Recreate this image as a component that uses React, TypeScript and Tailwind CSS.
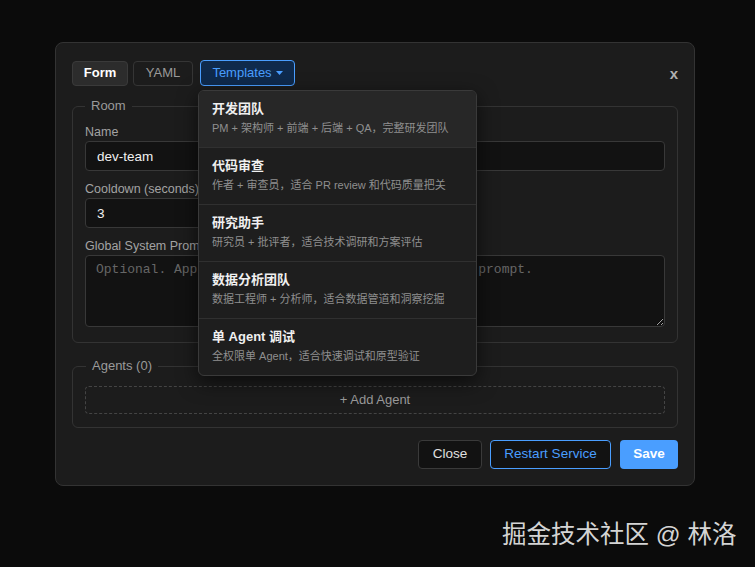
import React from "react";

const templates = [
  { title: "开发团队", desc: "PM + 架构师 + 前端 + 后端 + QA，完整研发团队" },
  { title: "代码审查", desc: "作者 + 审查员，适合 PR review 和代码质量把关" },
  { title: "研究助手", desc: "研究员 + 批评者，适合技术调研和方案评估" },
  { title: "数据分析团队", desc: "数据工程师 + 分析师，适合数据管道和洞察挖掘" },
  { title: "单 Agent 调试", desc: "全权限单 Agent，适合快速调试和原型验证" },
];

const font = "font-['Liberation_Sans','Noto_Sans_CJK_SC',sans-serif]";

function Field({ label, value, className = "" }: { label: string; value?: string; className?: string }) {
  return (
    <div className={"flex flex-col " + className}>
      <label className="text-[12.5px] leading-[18px] text-[#a3a3a3] whitespace-nowrap">{label}</label>
      <input
        readOnly
        value={value ?? ""}
        className="h-[30px] rounded-[4px] border border-[#383838] bg-[#121212] px-[11px] text-[13.5px] text-[#f0f0f0] outline-none"
      />
    </div>
  );
}

export default function App() {
  return (
    <div className={"relative w-[755px] h-[567px] bg-[#0b0b0b] overflow-hidden pt-[42px] pl-[55px] " + font}>
      <div className="relative w-[640px] h-[444px] rounded-[8px] border border-[#333] bg-[#1c1c1c] px-4 pt-[17px] pb-4 flex flex-col">
        {/* header */}
        <div className="flex items-center">
          <button className="h-[25px] w-[56px] rounded-[4px] border border-[#3a3a3a] bg-[#2c2c2c] text-[13px] font-semibold text-white">
            Form
          </button>
          <button className="ml-[5px] h-[25px] w-[60px] rounded-[4px] border border-[#353535] bg-transparent text-[13px] text-[#9a9a9a]">
            YAML
          </button>
          <button className="ml-[7px] h-[26px] w-[95px] rounded-[4px] border-[1.5px] border-[#4a9eff] bg-[#0f2a4c] text-[13px] text-[#4a9eff] flex items-center justify-center gap-[4px]">
            Templates
            <svg width="7" height="4" viewBox="0 0 7 4"><path d="M0 0h7L3.5 4z" fill="#4a9eff" /></svg>
          </button>
          <div className="flex-1" />
          <span className="text-[15px] font-bold text-[#b0b0b0] leading-none">x</span>
        </div>

        {/* Room */}
        <fieldset className="mt-[12px] rounded-[6px] border border-[#333] px-3 pb-[15px]">
          <legend className="px-1.5 text-[13px] leading-4 text-[#9a9a9a]">Room</legend>
          <div className="mt-[9px] grid grid-cols-2 gap-x-3 gap-y-[9px]">
            <Field label="Name" value="dev-team" />
            <Field label="Default Model" />
            <Field label="Cooldown (seconds)" value="3" />
            <div />
            <div className="col-span-2 flex flex-col">
              <label className="text-[12.5px] leading-[18px] text-[#a3a3a3]">Global System Prompt</label>
              <textarea
                readOnly
                placeholder="Optional. Applied to all agents before their own prompt."
                className="h-[72px] rounded-[4px] border border-[#383838] bg-[#121212] px-[10px] py-[5px] font-['Liberation_Mono',monospace] text-[13px] leading-[18px] text-[#ddd] placeholder:text-[#666] outline-none"
              />
            </div>
          </div>
        </fieldset>

        {/* Agents */}
        <fieldset className="mt-[15px] rounded-[6px] border border-[#333] px-3 pb-[13px]">
          <legend className="ml-[1px] px-1.5 text-[13px] leading-4 text-[#9a9a9a]">Agents (0)</legend>
          <button className="mt-[12px] h-[28px] w-full rounded-[4px] border border-dashed border-[#444] text-[13px] text-[#9a9a9a]">
            + Add Agent
          </button>
        </fieldset>

        {/* footer */}
        <div className="mt-[12px] flex justify-end gap-2">
          <button className="h-[29px] w-[64px] rounded-[4px] border border-[#3a3a3a] bg-[#121212] text-[13.5px] text-[#e0e0e0]">
            Close
          </button>
          <button className="h-[29px] w-[121px] rounded-[4px] border border-[#4a9eff] bg-[#121212] text-[13.5px] text-[#4a9eff]">
            Restart Service
          </button>
          <button className="ml-[1px] h-[29px] w-[58px] rounded-[4px] bg-[#4a9eff] text-[13.5px] font-semibold text-white">
            Save
          </button>
        </div>

        {/* dropdown */}
        <div className="absolute left-[142px] top-[47px] w-[279px] rounded-[6px] border border-[#3a3a3a] bg-[#1e1e1e] shadow-[0_6px_20px_rgba(0,0,0,0.6)] overflow-hidden">
          {templates.map((t, i) => (
            <div
              key={t.title}
              className={
                "px-[13px] pt-[10px] pb-[11px] " +
                (i > 0 ? "border-t border-[#303030] " : "") +
                (i === 0 ? "bg-[#272727]" : "")
              }
            >
              <div className="text-[13px] leading-4 font-bold text-[#f0f0f0]">{t.title}</div>
              <div className="mt-[4px] text-[11px] leading-[15px] text-[#8f8f8f] whitespace-nowrap">{t.desc}</div>
            </div>
          ))}
        </div>
      </div>

      <div className="absolute left-[502px] top-[519px] text-[24.5px] leading-8 text-[#d4d4d4] whitespace-nowrap">
        掘金技术社区 @ 林洛
      </div>
    </div>
  );
}
